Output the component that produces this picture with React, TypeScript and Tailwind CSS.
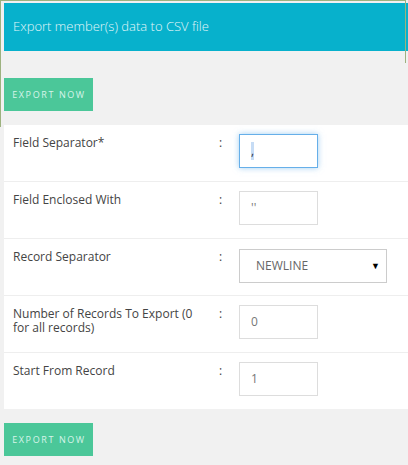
export default function App() {
  const rows = [
    { label: "Field Separator*", value: ",", focused: true },
    { label: "Field Enclosed With", value: "''" },
    { label: "Record Separator", select: "NEWLINE" },
    { label: "Number of Records To Export (0 for all records)", value: "0" },
    { label: "Start From Record", value: "1" },
  ];

  return (
    <div className="relative w-[408px] h-[465px] overflow-hidden bg-[#f1f1f1] pl-[4px] pt-[3px] font-['Open_Sans',sans-serif]">
      {/* stray frame lines */}
      <div className="absolute left-0 top-0 h-px w-[406px] bg-[#9db27f]" />
      <div className="absolute left-0 top-0 h-[127px] w-px bg-[#9db27f]" />
      <div className="absolute left-[405px] top-0 h-[63px] w-px bg-[#9db27f]" />

      <div className="flex h-[48px] items-center bg-[#07b1cc] px-[9px] text-[13px] font-light text-[#e3f6f9]">
        Export member(s) data to CSV file
      </div>

      <button className="mt-[27px] flex h-[33px] w-[89px] items-center justify-center bg-[#4bc799] pl-[1px] text-[9px] tracking-[1.6px] text-[#d8f4e9]">
        EXPORT NOW
      </button>

      <div className="mt-[14px] bg-white">
        {rows.map((r, i) => (
          <div
            key={i}
            className={
              "flex h-[56px] items-start pl-[9px] " +
              (i < rows.length - 1 ? "box-content border-b border-[#eeeeee]" : "")
            }
          >
            <div className="w-[206px] pr-[12px] pt-[11px] text-[12px] leading-[14px] text-[#444]">
              {r.label}
            </div>
            <div className="w-[20px] pt-[11px] text-[12px] leading-[14px] text-[#444]">:</div>
            {r.select ? (
              <div className="mt-[10px] flex h-[34px] w-[148px] items-center justify-between border border-[#cccccc] pl-[16px] pr-[6px] text-[12px] text-[#666]">
                <span>{r.select}</span>
                <span className="text-[9px] text-black">▼</span>
              </div>
            ) : (
              <div
                className={
                  "mt-[9px] flex h-[34px] w-[79px] items-center border pl-[11px] text-[12px] text-[#777] " +
                  (r.focused
                    ? "border-[#66afe9] shadow-[0_0_6px_rgba(102,175,233,0.6)]"
                    : "border-[#dddddd]")
                }
              >
                <span className={r.focused ? "bg-[#c6dcf5] text-[#334]" : ""}>{r.value}</span>
              </div>
            )}
          </div>
        ))}
      </div>

      <button className="mt-[14px] flex h-[33px] w-[89px] items-center justify-center bg-[#4bc799] pl-[1px] text-[9px] tracking-[1.6px] text-[#d8f4e9]">
        EXPORT NOW
      </button>
    </div>
  );
}
